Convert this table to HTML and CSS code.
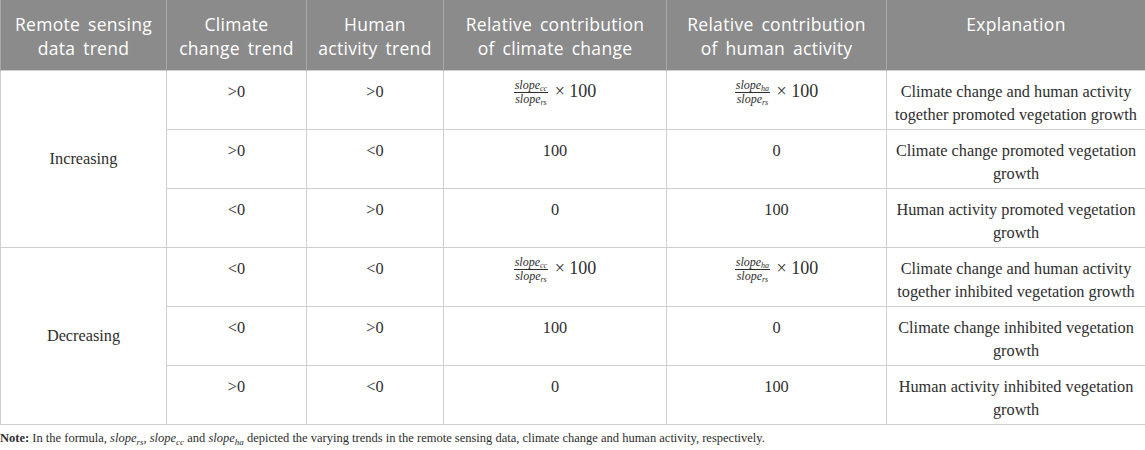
FILE: index.html
```html
<!DOCTYPE html>
<html>
<head>
<meta charset="utf-8">
<link rel="stylesheet" href="styles.css">
</head>
<body>
<table class="tbl">
  <colgroup>
    <col class="c1"><col class="c2"><col class="c3"><col class="c4"><col class="c5"><col class="c6">
  </colgroup>
  <thead>
    <tr>
      <th>Remote sensing<br>data trend</th>
      <th>Climate<br>change trend</th>
      <th>Human<br>activity trend</th>
      <th>Relative contribution<br>of climate change</th>
      <th>Relative contribution<br>of human activity</th>
      <th>Explanation</th>
    </tr>
  </thead>
  <tbody>
    <tr>
      <td class="group" rowspan="3">Increasing</td>
      <td>&gt;0</td>
      <td>&gt;0</td>
      <td><span class="formula"><span class="frac"><span class="num">slope<sub>cc</sub></span><span class="den">slope<sub>rs</sub></span></span> × 100</span></td>
      <td><span class="formula"><span class="frac"><span class="num">slope<sub>ha</sub></span><span class="den">slope<sub>rs</sub></span></span> × 100</span></td>
      <td>Climate change and human activity together promoted vegetation growth</td>
    </tr>
    <tr>
      <td>&gt;0</td>
      <td>&lt;0</td>
      <td>100</td>
      <td>0</td>
      <td>Climate change promoted vegetation growth</td>
    </tr>
    <tr>
      <td>&lt;0</td>
      <td>&gt;0</td>
      <td>0</td>
      <td>100</td>
      <td>Human activity promoted vegetation growth</td>
    </tr>
    <tr>
      <td class="group" rowspan="3">Decreasing</td>
      <td>&lt;0</td>
      <td>&lt;0</td>
      <td><span class="formula"><span class="frac"><span class="num">slope<sub>cc</sub></span><span class="den">slope<sub>rs</sub></span></span> × 100</span></td>
      <td><span class="formula"><span class="frac"><span class="num">slope<sub>ha</sub></span><span class="den">slope<sub>rs</sub></span></span> × 100</span></td>
      <td>Climate change and human activity together inhibited vegetation growth</td>
    </tr>
    <tr>
      <td>&lt;0</td>
      <td>&gt;0</td>
      <td>100</td>
      <td>0</td>
      <td>Climate change inhibited vegetation growth</td>
    </tr>
    <tr>
      <td>&gt;0</td>
      <td>&lt;0</td>
      <td>0</td>
      <td>100</td>
      <td>Human activity inhibited vegetation growth</td>
    </tr>
  </tbody>
</table>
<p class="note"><b>Note:</b> In the formula, <i>slope<sub>rs</sub></i>, <i>slope<sub>cc</sub></i> and <i>slope<sub>ha</sub></i> depicted the varying trends in the remote sensing data, climate change and human activity, respectively.</p>
</body>
</html>
```

FILE: styles.css
```css
html, body {
  margin: 0;
  padding: 0;
  background: #ffffff;
}

.tbl {
  border-collapse: collapse;
  table-layout: fixed;
  width: 1145px;
  font-family: "Liberation Serif", "Times New Roman", serif;
  font-size: 16.3px;
  color: #2e2e2e;
}

.c1 { width: 166px; }
.c2 { width: 140px; }
.c3 { width: 137px; }
.c4 { width: 223px; }
.c5 { width: 220px; }
.c6 { width: 259px; }

.tbl th {
  background: #8b8b8b;
  color: #ffffff;
  font-family: "Open Sans", "Liberation Sans", sans-serif;
  font-weight: 400;
  font-size: 17.5px;
  letter-spacing: 0.3px;
  word-spacing: 3px;
  line-height: 24px;
  height: 70px;
  box-sizing: border-box;
  padding: 12px 4px 0;
  vertical-align: top;
  text-align: center;
  white-space: nowrap;
  border-left: 1px solid #a9a9a9;
  border-right: 1px solid #a9a9a9;
}

.tbl td {
  border: 1px solid #cfcfcf;
  height: 59px;
  box-sizing: border-box;
  padding: 9px 8px 0;
  line-height: 23px;
  vertical-align: top;
  text-align: center;
}

.tbl td.group {
  vertical-align: middle;
  padding-top: 0;
}

.formula {
  font-size: 18px;
  white-space: nowrap;
}

.frac {
  display: inline-flex;
  flex-direction: column;
  align-items: center;
  vertical-align: middle;
  font-style: italic;
  font-size: 12px;
  line-height: 13px;
  margin-right: 2px;
  position: relative;
  top: -1px;
}

.frac .num {
  border-bottom: 1px solid #2e2e2e;
  padding: 0 1px;
}

.frac .den {
  padding: 0 1px;
}

.frac sub {
  font-size: 8px;
  vertical-align: -2px;
  line-height: 0;
}

.note {
  margin: 3px 0 0;
  font-family: "Liberation Serif", "Times New Roman", serif;
  font-size: 12.5px;
  line-height: 20px;
  color: #2e2e2e;
}

.note sub {
  font-size: 9px;
  vertical-align: -3px;
  line-height: 0;
}
```
